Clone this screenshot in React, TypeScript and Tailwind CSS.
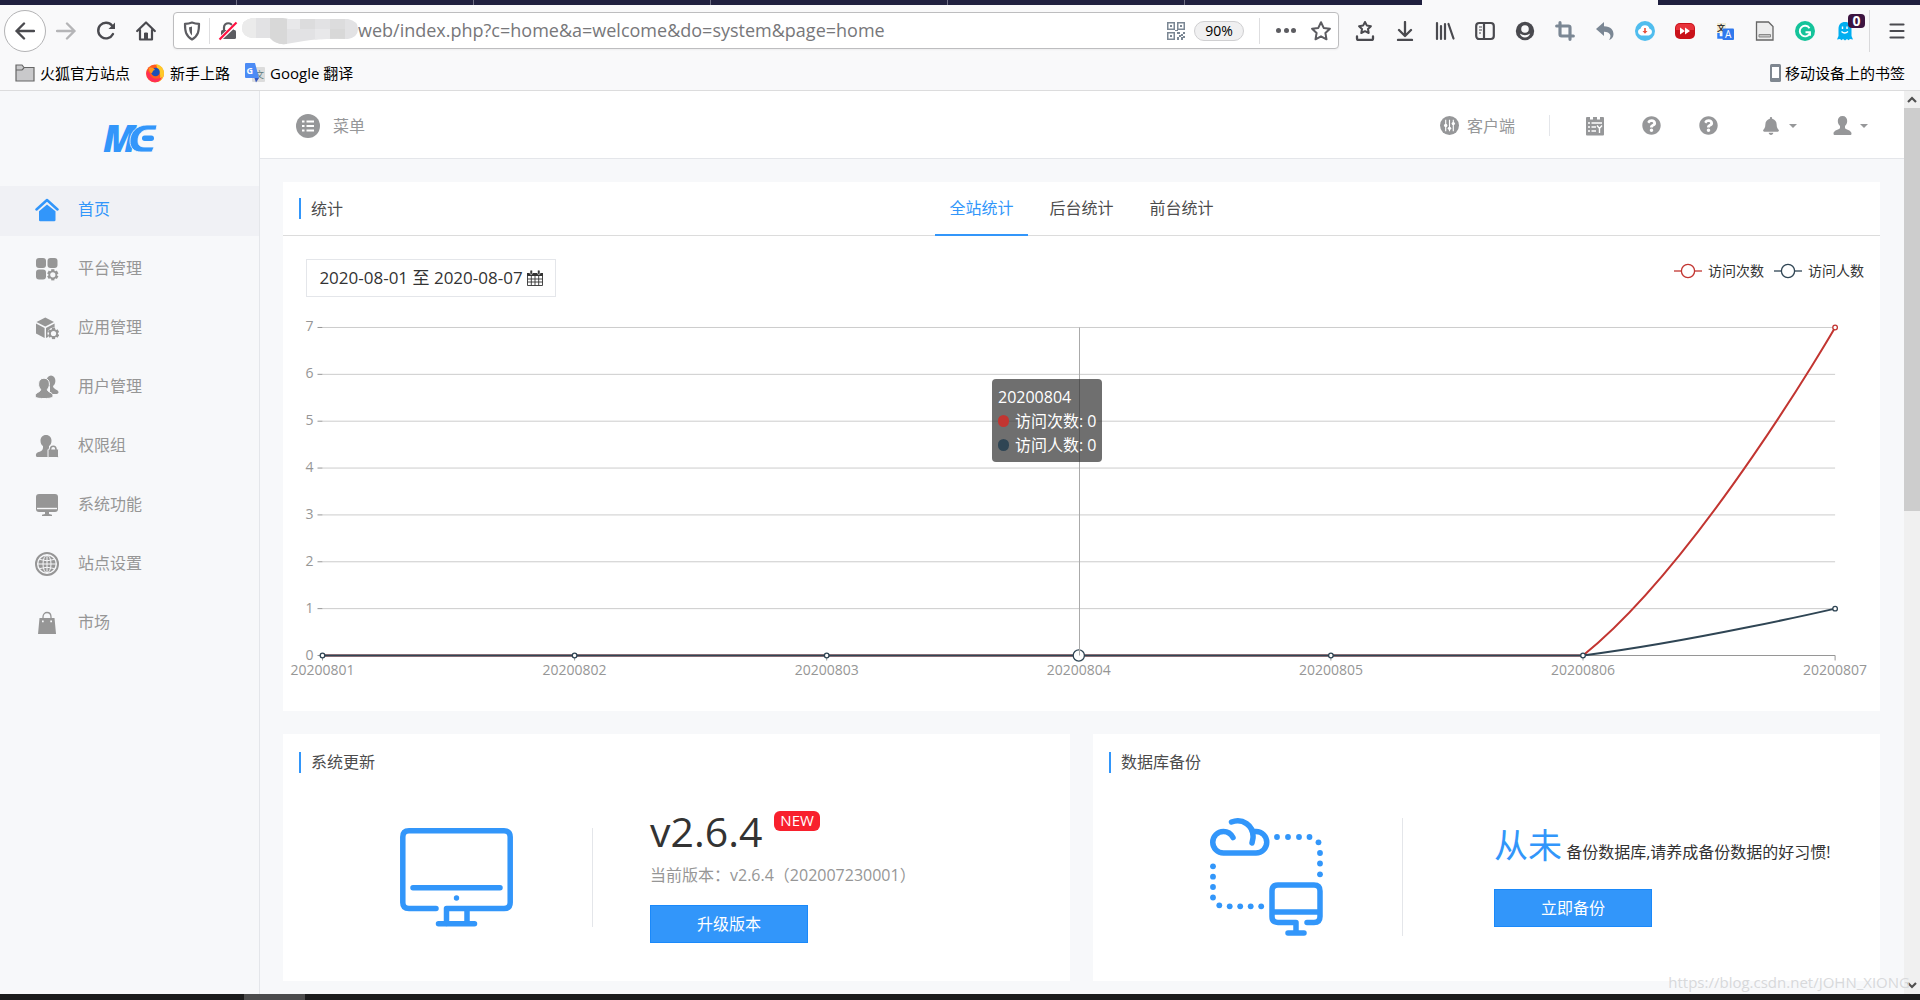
import React, { useState } from 'react';
import { FaBell, FaQuestionCircle } from 'react-icons/fa';
import { Crop } from 'lucide-react';

const GREY = '#4a4a4f';

const MENU = [
  { key: 'home', label: '首页' },
  { key: 'platform', label: '平台管理' },
  { key: 'app', label: '应用管理' },
  { key: 'user', label: '用户管理' },
  { key: 'role', label: '权限组' },
  { key: 'system', label: '系统功能' },
  { key: 'site', label: '站点设置' },
  { key: 'market', label: '市场' },
];

const TABS = ['全站统计', '后台统计', '前台统计'];
const DAYS = ['20200801', '20200802', '20200803', '20200804', '20200805', '20200806', '20200807'];

const Gear = ({ x, y }: { x: number; y: number }) => (
  <g transform={`translate(${x} ${y})`}>
    {[0, 60, 120].map(a => (
      <rect key={a} x="-1.6" y="-5.6" width="3.2" height="11.2" transform={`rotate(${a})`} />
    ))}
    <circle r="4.4" />
    <circle r="2.6" fill="#f7f8fa" />
  </g>
);

const MenuIcon = ({ name }: { name: string }) => (
  <svg viewBox="0 0 24 24" className="w-6 h-6 shrink-0" fill="currentColor">
    {name === 'home' && (
      <>
        <path d="M1.500 11.500 12 2l10.500 9.500" fill="none" stroke="currentColor" strokeWidth="2.500" strokeLinecap="round" strokeLinejoin="round" />
        <path d="M4 13.200 12 6.500l8.500 6.700V22a1.300 1.300 0 0 1-1.300 1.300H5.200A1.300 1.300 0 0 1 4 22Z" />
      </>
    )}
    {name === 'platform' && (
      <>
        <rect x="1" y="1" width="10" height="10" rx="3" />
        <rect x="12.500" y="1" width="10" height="10" rx="3" />
        <rect x="1" y="12.500" width="10" height="10" rx="3" />
        <Gear x={17.8} y={17.8} />
      </>
    )}
    {name === 'app' && (
      <>
        <path d="M10.300 1.500 19 5.900 10.300 10.500 1.500 6.100Z" />
        <path d="M1 7.500l8.600 4.500V22L1 17.500Z" />
        <path d="M19.600 7.500 11 12v10l3-1.500.3-6 5.300-2.500Z" />
        <circle cx="18.500" cy="17.500" r="6" fill="#f7f8fa" />
        <Gear x={18.5} y={17.5} />
      </>
    )}
    {name === 'user' && (
      <>
        <ellipse cx="16" cy="6" rx="4.400" ry="5.500" />
        <path d="M15 11h3c.2 3.500 5.500 3.500 5.500 6 0 1.500-1 2-2.500 2h-6Z" />
        <path d="M9 3.200c3.500 0 5.400 2.600 5.400 5.800 0 2.600-.8 4-2 5.200-.5 3.200 5.600 2.800 5.600 6.600 0 2-2 2.700-9 2.700S.3 22.800.3 20.800C.3 17 6 17.400 5.600 14.200 4.400 13 3.600 11.600 3.600 9 3.600 5.800 5.500 3.200 9 3.200Z" stroke="#f7f8fa" />
      </>
    )}
    {name === 'role' && (
      <>
        <path d="M11 1c3.500 0 5.500 2.500 5.500 5.700 0 2.500-1 4.300-2.500 5.300v4l-1 7H2c-1.500-.5-1.500-3.500.5-4.500 3-1.300 6-1.500 5.500-6.500C6.500 11 5.500 9.200 5.500 6.700 5.500 3.500 7.500 1 11 1Z" />
        <rect x="13" y="15" width="10.500" height="8.500" rx="1" stroke="#f7f8fa" />
        <path d="M15.500 16.500v-1.300c0-4 5.500-4 5.500 0v1.300" fill="none" stroke="currentColor" strokeWidth="1.600" />
      </>
    )}
    {name === 'system' && (
      <>
        <rect x="1" y="1" width="22" height="18" rx="3" />
        <path d="M2 15.500h20" stroke="#f7f8fa" strokeWidth="1.400" />
        <path d="M10 19h4v2l3 .8V23H7v-1.200l3-.8Z" />
      </>
    )}
    {name === 'site' && (
      <>
        <circle cx="12" cy="12" r="11" fill="none" stroke="currentColor" strokeWidth="2" />
        <circle cx="12" cy="12" r="8.600" />
        <g fill="none" stroke="#f7f8fa" strokeWidth="1">
          <ellipse cx="12" cy="12" rx="4" ry="8.800" />
          <path d="M3 12h18M12 3v18M5 7.500q7 2.500 14 0M5 16.500q7-2.500 14 0" />
        </g>
      </>
    )}
    {name === 'market' && (
      <>
        <path d="M4.500 7h15l1.500 16H3Z" />
        <path d="M8 9.500V6c0-6 8-6 8 0v3.500" fill="none" stroke="currentColor" strokeWidth="1.300" />
        <path d="M7 9.500h1.700v1.700H7zM15.300 9.500H17v1.700h-1.700z" fill="#f7f8fa" />
      </>
    )}
  </svg>
);

const ToolButton = ({ label, children }: { label: string; children: React.ReactNode }) => (
  <button aria-label={label} className="w-10 h-10 flex items-center justify-center shrink-0 relative">
    {children}
  </button>
);

const Extensions = () => (
  <div className="flex items-center ml-1.5">
    <ToolButton label="保存书签">
      <svg viewBox="0 0 20 20" className="w-5 h-5" fill="none" stroke={GREY} strokeWidth="2" strokeLinejoin="round" strokeLinecap="round">
        <path d="m10 1 1.900 3.600 4 .6-2.900 2.800.7 4-3.700-1.800L6.300 12l.7-4-2.900-2.800 4-.6Z" />
        <path d="M2 15.500v2q0 1.500 1.500 1.500h13q1.500 0 1.500-1.500v-2" strokeWidth="2.300" />
      </svg>
    </ToolButton>
    <ToolButton label="下载">
      <svg viewBox="0 0 20 20" className="w-5 h-5" fill="none" stroke={GREY} strokeWidth="2.300" strokeLinejoin="round" strokeLinecap="round">
        <path d="M10 1v13.500M4 9l6 6 6-6M3 19h14" />
      </svg>
    </ToolButton>
    <ToolButton label="书签库">
      <svg viewBox="0 0 20 20" className="w-5 h-5" fill="none" stroke={GREY} strokeWidth="2.200" strokeLinecap="round">
        <path d="M2 2v16M6 5v13M10 3v15M13.500 3l5 14.500" />
      </svg>
    </ToolButton>
    <ToolButton label="侧栏">
      <svg viewBox="0 0 20 20" className="w-5 h-5" fill="none" stroke={GREY} strokeWidth="2.200">
        <rect x="1.200" y="2" width="17.600" height="16" rx="3" />
        <path d="M9 2v16" />
        <path d="M4 6h3M4 9h3M4 12h2" strokeWidth="1.200" />
      </svg>
    </ToolButton>
    <ToolButton label="账户">
      <svg viewBox="0 0 20 20" className="w-5 h-5">
        <circle cx="10" cy="10" r="9.200" fill={GREY} />
        <circle cx="10" cy="8" r="3.800" fill="#f9f9fa" />
        <path d="M4.800 12.500q5.200 3.500 10.400 0-1.500 4-5.200 4t-5.200-4Z" fill="#f9f9fa" />
      </svg>
    </ToolButton>
    <ToolButton label="截图"><Crop className="w-5 h-5 text-[#7b8794]" strokeWidth={3.8} /></ToolButton>
    <ToolButton label="撤销">
      <svg viewBox="0 0 20 20" className="w-5 h-5" fill="#7b8794">
        <path d="M1 8 9 1v4.300c7 .2 9.500 4 9.500 8 0 3-2 5-4.500 5.700 3-4 1.500-8-5-8.200V15Z" />
      </svg>
    </ToolButton>
    <ToolButton label="云下载">
      <svg viewBox="0 0 20 20" className="w-5 h-5">
        <circle cx="10" cy="10" r="10" fill="#50bdee" />
        <path d="M6 14.500a3.500 3.500 0 0 1-.5-6.800 4.700 4.700 0 0 1 9 0 3.500 3.500 0 0 1-.5 6.800Z" fill="#fff" />
        <path d="M9.200 7h1.600v3h1.700L10 12.800 7.500 10h1.700Z" fill="#e8503a" />
      </svg>
    </ToolButton>
    <ToolButton label="视频下载">
      <svg viewBox="0 0 20 20" className="w-5 h-5">
        <rect y="2" width="20" height="16" rx="5" fill="#c9121a" />
        <path d="M1 9V7q0-4 4-4h10q4 0 4 4v2Z" fill="#e8323a" />
        <path d="m5 6.500 5 3.500-5 3.500zM10 6.500l5 3.500-5 3.500z" fill="#fff" />
      </svg>
    </ToolButton>
    <ToolButton label="翻译">
      <svg viewBox="0 0 20 20" className="w-5 h-5">
        <rect x="2" y="2" width="9" height="10" fill="#f3ecd4" />
        <text x="2" y="10" fontSize="8" fontWeight="700" fill="#333">文</text>
        <path d="M3.500 12v4.500H8" fill="none" stroke="#2f7df6" strokeWidth="2.500" />
        <rect x="7.500" y="7.500" width="11.500" height="11.500" rx="1" fill="#3079ed" />
        <text x="10" y="17" fontSize="10" fill="#fff">A</text>
      </svg>
    </ToolButton>
    <ToolButton label="阅读">
      <svg viewBox="0 0 20 20" className="w-5 h-5">
        <path d="M1.500 1h12l4.500 4.500V19h-16.500Z" fill="#ededed" stroke="#666" strokeWidth="1.300" />
        <path d="M4 13.500h11.500V16H4Z" fill="#c4c4c4" stroke="#8a8a8a" />
      </svg>
    </ToolButton>
    <ToolButton label="语法">
      <svg viewBox="0 0 20 20" className="w-5 h-5" fill="none" stroke="#fff" strokeWidth="1.900">
        <circle cx="10" cy="10" r="10" fill="#15c39a" stroke="none" />
        <path d="M14.500 7.200a5.300 5.300 0 1 0 .5 4.800M10.500 11.200h4.500v3.600" />
      </svg>
    </ToolButton>
    <ToolButton label="隐私保护">
      <svg viewBox="0 0 20 20" className="w-5 h-5" fill="#00aef0">
        <path d="M3.500 15V8C3.500 3.500 6 1 10 1s6.500 2.500 6.500 7v7l1.500 3.500-3-.5-1.500 1.200L12 18l-2 1.500L8 18l-1.500 1.200L5 18l-3 .5Z" />
        <path d="M7.500 5.500v2.500M12 5.500v2.500M6.500 10.500q3.200 3 6.500 0" fill="none" stroke="#fff" strokeWidth="1.400" />
      </svg>
      <span className="absolute top-[3px] right-0 w-[17px] h-3.5 rounded-sm bg-[#3d1440] text-white text-sm leading-3.5 font-bold text-center">0</span>
    </ToolButton>
    <div className="w-px h-[42px] bg-[#d9d9db] ml-1" />
    <button aria-label="打开菜单" className="w-[50px] h-10 pl-1 flex items-center justify-center">
      <svg viewBox="0 0 16 16" className="w-4 h-4" stroke={GREY} strokeWidth="2.200" strokeLinecap="round">
        <path d="M1.500 1.500h13M1.500 8h13M1.500 14.500h13" />
      </svg>
    </button>
  </div>
);

const QrIcon = () => (
  <svg viewBox="0 0 18 18" className="w-[18px] h-[18px] shrink-0" fill="#7b8794">
    {[[0, 0], [10, 0], [0, 10]].map(([x, y]) => (
      <g key={`${x}-${y}`}>
        <rect x={x + 0.75} y={y + 0.75} width="6.500" height="6.500" fill="none" stroke="#7b8794" strokeWidth="1.500" />
        <rect x={x + 3} y={y + 3} width="2" height="2" />
      </g>
    ))}
    <path d="M10 10h3v2h-3zM14 12h2v2h-2zM16 10h2v2h-2zM12 13h2v2h-2zM10 15h2v3h-2zM14 15h2v3h-2zM16 14h2v2h-2zM8 8h3v1H8z" />
  </svg>
);

const Browser = () => (
  <header className="bg-[#f9f9fa] shrink-0 border-b border-[#dcdcdd] text-black">
    <div className="h-[5px] flex bg-[#20203f]">
      {[1, 2, 3, 4, 5].map(n => <div key={n} className="w-[237px] border-r border-[#6d6d83]" />)}
      <div className="w-[237px]" />
      <div className="w-[236px] bg-[#f9f9fa]" />
    </div>
    <div className="h-[51px] flex items-center pl-1">
      <button aria-label="后退" className="w-[42px] h-[42px] rounded-full border border-[#b3b3b5] bg-white flex items-center justify-center shrink-0">
        <svg viewBox="0 0 20 20" className="w-5 h-5" fill="none" stroke={GREY} strokeWidth="2.400" strokeLinecap="round" strokeLinejoin="round">
          <path d="M19 10H1.500M9 2.500 1.500 10 9 17.500" />
        </svg>
      </button>
      <button aria-label="前进" className="w-10 h-10 flex items-center justify-center shrink-0">
        <svg viewBox="0 0 20 20" className="w-5 h-5" fill="none" stroke="#b5b5b7" strokeWidth="2.400" strokeLinecap="round" strokeLinejoin="round">
          <path d="M1 10h17.500M11 2.500l7.500 7.500-7.500 7.500" />
        </svg>
      </button>
      <button aria-label="刷新" className="w-10 h-10 flex items-center justify-center shrink-0">
        <svg viewBox="0 0 20 20" className="w-5 h-5" fill="none" stroke={GREY} strokeWidth="2.400" strokeLinecap="round">
          <path d="M16 4.500a7.800 7.800 0 1 0 1 8.500" />
          <path d="M19 1.500V8h-6.500Z" fill={GREY} stroke="none" />
        </svg>
      </button>
      <button aria-label="主页" className="w-10 h-10 flex items-center justify-center shrink-0">
        <svg viewBox="0 0 20 20" className="w-5 h-5" fill="none" stroke={GREY} strokeWidth="2.200" strokeLinecap="round" strokeLinejoin="round">
          <path d="M1.200 10 10 1.500l8.800 8.500M4 9v9.500h12V9" />
          <path d="M8.500 18v-6h3v6Z" fill={GREY} strokeWidth="1" />
        </svg>
      </button>
      <div className="ml-[7px] flex-1 h-[37px] bg-white border border-[#bdbdbf] rounded-sm shadow-xs flex items-center pl-[9px] pr-[7px]">
        <svg viewBox="0 0 18 20" className="w-[18px] h-5 shrink-0" fill="none" stroke="#5c5c61" strokeWidth="2.200" strokeLinejoin="round">
          <path d="M9 1.500c2.500 1 4.500 1.300 7 1.300 0 7-.5 12-7 15.700C2.500 14.800 2 9.800 2 2.800c2.500 0 4.500-.3 7-1.300Z" />
          <path d="M9 5.500c-1.200.6-2 .7-3 .8.200 4 1 6.500 3 8.200Z" fill="#5c5c61" stroke="none" />
        </svg>
        <div className="w-px h-[26px] bg-[#dedee0] ml-2" />
        <svg viewBox="0 0 20 20" className="w-5 h-5 ml-2 shrink-0">
          <rect x="3" y="9" width="15" height="9" rx="1.500" fill="#5c5c61" />
          <path d="M6 9V6.500C6 .8 14.500.8 14.500 6.500V9" fill="none" stroke="#5c5c61" strokeWidth="2.200" />
          <path d="M2 18 18.500 2.500" stroke="#fff" strokeWidth="4" />
          <path d="M1.500 18.500 18.500 1.500" stroke="#ff0f3f" strokeWidth="2.200" />
        </svg>
        <svg viewBox="0 0 116 28" className="w-[116px] h-7 ml-1 shrink-0">
          <clipPath id="smudge">
            <path d="M10 1H40Q50 3 60 2H106Q116 4 116 12T106 22Q80 21 62 24L44 27Q34 28 28 21H10Q0 19 0 11T10 1Z" />
          </clipPath>
          <g clipPath="url(#smudge)">
            <rect width="116" height="28" fill="#e2e2e4" />
            <path d="M0 0h14v28H0z" fill="#ebebeb" />
            <path d="M28 0h17v28H28zM88 12h15v12H88z" fill="#d8d8d8" />
            <path d="M58 0h15v12H58zM88 0h15v12H88z" fill="#dcdcdd" />
            <path d="M45 0h13v12H45zM73 12h15v12H73z" fill="#e8e8ea" />
          </g>
        </svg>
        <input
          aria-label="地址"
          className="flex-1 min-w-0 pb-0.5 text-lg text-[#77777a] outline-none"
          defaultValue="web/index.php?c=home&a=welcome&do=system&page=home"
        />
        <QrIcon />
        <button className="ml-[9px] w-[50px] h-5 rounded-full border border-[#cfcfd1] bg-[#f0f0f1] text-sm leading-4 shrink-0">90%</button>
        <div className="w-px h-[26px] bg-[#dedee0] ml-[15px]" />
        <button aria-label="页面操作" className="w-5 ml-4 flex justify-between">
          <i className="w-[5px] h-[5px] rounded-full bg-[#5c5c61]" />
          <i className="w-[5px] h-[5px] rounded-full bg-[#5c5c61]" />
          <i className="w-[5px] h-[5px] rounded-full bg-[#5c5c61]" />
        </button>
        <button aria-label="加入书签" className="ml-[15px]">
          <svg viewBox="0 0 20 20" className="w-5 h-5" fill="none" stroke="#5c5c61" strokeWidth="2" strokeLinejoin="round">
            <path d="m10 1.200 2.700 5.700 6.200.8-4.500 4.300 1.100 6.300-5.500-3-5.500 3L5.600 12 1.100 7.700l6.200-.8Z" />
          </svg>
        </button>
      </div>
      <Extensions />
    </div>
    <nav className="h-[34px] flex items-center px-[15px] pb-px text-[15px] leading-5">
      <a href="#" className="flex items-center gap-[5px]">
        <svg viewBox="0 0 20 18" className="w-5 h-[18px]" fill="#c9c9cb" stroke="#666" strokeWidth="1.200">
          <path d="M1 17V1h6l2 2.500h10V17Z" />
          <path d="M1 6h6l2-2" fill="none" />
        </svg>
        火狐官方站点
      </a>
      <a href="#" className="flex items-center gap-[5px] ml-[15px]">
        <svg viewBox="0 0 20 20" className="w-5 h-5">
          <circle cx="10" cy="10.500" r="9" fill="#ff5a1f" />
          <path d="M11 1c5 1 8.500 5 8 10-.5 4-3 7-6 8 3-4 3-8 0-11Z" fill="#ffc928" />
          <path d="M2 7c-2 6 2 12 8 12 4 0 6-2 7-5-4 3-11 2-12-3Z" fill="#ff2d55" />
          <circle cx="10.500" cy="9" r="4.300" fill="#1b4fb8" />
          <path d="M4 5c3-1 5 0 6 2-2 0-2 1-3 3-2 0-3-2-3-5Z" fill="#ff9a1c" />
        </svg>
        新手上路
      </a>
      <a href="#" className="flex items-center gap-[5px] ml-[15px]">
        <svg viewBox="0 0 20 20" className="w-5 h-5">
          <rect x="7" y="4" width="13" height="15" rx="1" fill="#dcdcdc" />
          <text x="10" y="15" fontSize="9" fill="#5f7d80">文</text>
          <path d="M1 0h9l4 15H1q-1 0-1-1V1q0-1 1-1Z" fill="#4c8bf5" />
          <path d="M9.500 15H14l-3 4.500Z" fill="#3558c0" />
          <text x="1.500" y="11" fontSize="9" fontWeight="700" fill="#fff">G</text>
        </svg>
        Google 翻译
      </a>
      <a href="#" className="flex items-center gap-1 ml-auto">
        <svg viewBox="0 0 11 18" className="w-[11px] h-[18px]">
          <rect width="11" height="18" rx="1.500" fill="#7f8790" />
          <rect x="2" y="3" width="7" height="11" fill="#fff" />
        </svg>
        移动设备上的书签
      </a>
    </nav>
  </header>
);

const Sidebar = () => {
  const [active, setActive] = useState('home');
  return (
    <aside className="w-[260px] shrink-0 border-r border-[#e4e6ea]">
      <div className="h-[95px] flex items-center justify-center">
        <svg viewBox="0 0 54 28" className="w-[54px] h-7 overflow-visible" fill="#3296fa">
          <text x="0" y="27" fontFamily="Open Sans" fontSize="37" fontWeight="800" fontStyle="italic">M</text>
          <path d="M54 0H44C33 0 27 8 27 16c0 7 4 11 11 11h11l2-5H42c-5 0-7-2-7-6 0-7 4-11 10-11h8Z" stroke="#f7f8fa" strokeWidth=".8" />
          <rect x="39" y="10.500" width="12" height="5.500" rx="2.700" />
        </svg>
      </div>
      <nav className="flex flex-col gap-[9px]">
        {MENU.map(item => (
          <a
            key={item.key}
            href="#"
            onClick={() => setActive(item.key)}
            className={
              'h-[50px] flex items-center gap-[19px] pl-[35px] pb-0.5 text-base ' +
              (active === item.key ? 'bg-[#f0f1f5] text-[#3296fa]' : 'text-[#969696]')
            }
          >
            <MenuIcon name={item.key} />
            <span className="pb-0.5">{item.label}</span>
          </a>
        ))}
      </nav>
    </aside>
  );
};

const Caret = () => (
  <svg viewBox="0 0 8 4" className="w-2 h-1" fill="currentColor"><path d="M0 0h8L4 4Z" /></svg>
);

const TopBar = () => (
  <div className="h-[68px] shrink-0 bg-white border-b border-[#e4e6ea] flex items-center pl-9 pr-9 pt-0.5 text-base text-[#969799]">
    <button className="flex items-center gap-[13px]">
      <svg viewBox="0 0 24 24" className="w-6 h-6">
        <circle cx="12" cy="12" r="12" fill="#969799" />
        <path d="M6 7.500h2.500M6 12h2.500M6 16.500h2.500M10.500 7.500H18M10.500 12H18M10.500 16.500H18" stroke="#fff" strokeWidth="1.800" />
      </svg>
      菜单
    </button>
    <button className="flex items-center gap-2 ml-auto">
      <svg viewBox="0 0 20 20" className="w-[19px] h-[19px]">
        <circle cx="10" cy="10" r="10" fill="#969799" />
        <path d="M6 4v12M10 4v12M14 4v12" stroke="#fff" strokeWidth="1.200" />
        <g fill="#fff"><circle cx="6" cy="10" r="1.800" /><circle cx="10" cy="13" r="1.800" /><circle cx="14" cy="8" r="1.800" /></g>
      </svg>
      客户端
    </button>
    <div className="w-px h-[21px] bg-[#e4e6ea] ml-[34px]" />
    <button aria-label="工单" className="ml-9">
      <svg viewBox="0 0 18 20" className="w-[18px] h-5">
        <path d="M1 1h3v2.500h3V1h4v2.500h3V1h3q1 0 1 1v16.500q0 1-1 1H1q-1 0-1-1V2q0-1 1-1Z" fill="#969799" />
        <path d="M2 7h2M5.500 7H16M2 11h2M5.500 11H10M2 15h2M5.500 15H10M11 9.500l2.500 3 2.500-3M13.500 12v5" stroke="#fff" strokeWidth="1.400" fill="none" />
      </svg>
    </button>
    <button aria-label="帮助" className="ml-[38px]"><FaQuestionCircle className="w-[19px] h-[19px]" /></button>
    <button aria-label="常见问题" className="ml-[38px]"><FaQuestionCircle className="w-[19px] h-[19px]" /></button>
    <button aria-label="消息" className="ml-[45px] flex items-center gap-2.5">
      <FaBell className="w-4 h-[18px]" />
      <Caret />
    </button>
    <button aria-label="账号" className="ml-9 flex items-center gap-2">
      <svg viewBox="0 0 18 19" className="w-[19px] h-[19px]" fill="currentColor">
        <path d="M9 0c3 0 4.700 2 4.700 5 0 2.300-1 4-2.200 5v2c0 1.500 6.500 2 6.500 5.500 0 1-.5 1.500-1.500 1.500h-15C.5 19 0 18.500 0 17.500 0 14 6.500 13.500 6.500 12v-2C5.300 9 4.300 7.300 4.300 5c0-3 1.700-5 4.700-5Z" />
      </svg>
      <Caret />
    </button>
  </div>
);

const CardTitle = ({ children }: { children: React.ReactNode }) => (
  <h2 className="flex items-center gap-2.5 text-base leading-6 text-[#4c4c4c]">
    <i className="w-0.5 h-[21px] bg-[#3296fa]" />
    {children}
  </h2>
);

const LegendItem = ({ label, color }: { label: string; color: string }) => (
  <span className="flex items-center gap-1.5">
    <svg viewBox="0 0 28 16" className="w-7 h-4" fill="#fff" stroke={color} strokeWidth="1.300">
      <path d="M0 8h28" />
      <circle cx="14" cy="8" r="6.600" />
    </svg>
    {label}
  </span>
);

const LEFT = 39.5;
const STEP = 252.1;
const BASE = 358.5;
const UNIT = 46.86;
const px = (i: number) => LEFT + i * STEP;
const py = (v: number) => BASE - v * UNIT;

const Chart = () => (
  <svg viewBox="0 0 1597 414" className="w-full h-auto block" fontSize="14" fill="none">
    {[0, 1, 2, 3, 4, 5, 6, 7].map(v => (
      <g key={v}>
        <path d={`M${LEFT} ${py(v)}H${px(6)}`} stroke="#ccc" />
        <path d={`M${LEFT - 5} ${py(v)}h5`} stroke="#969696" />
        <text x={LEFT - 9} y={py(v) + 4} fill="#969696" textAnchor="end">{v}</text>
      </g>
    ))}
    <path d={`M${LEFT} ${BASE}H${px(6)}`} stroke="#969696" />
    {DAYS.map((d, i) => (
      <g key={d}>
        <path d={`M${px(i)} ${BASE}v5`} stroke="#969696" />
        <text x={px(i)} y={BASE + 19} fill="#969696" textAnchor="middle">{d}</text>
      </g>
    ))}
    <path
      d={`M${px(0)} ${BASE}H${px(5)}C${px(5) + 116} ${BASE - 93} ${px(6)} ${py(7)} ${px(6)} ${py(7)}`}
      stroke="#c23531" strokeWidth="2"
    />
    <path
      d={`M${px(0)} ${BASE}H${px(5)}C${px(5) + 110} ${BASE - 14} ${px(6)} ${py(1)} ${px(6)} ${py(1)}`}
      stroke="#2f4554" strokeWidth="2"
    />
    <g fill="#fff" stroke="#2f4554" strokeWidth="1.300">
      {[0, 1, 2, 4, 5].map(i => <circle key={i} cx={px(i)} cy={BASE} r="2.300" />)}
      <circle cx={px(3)} cy={BASE} r="5.600" />
      <circle cx={px(6)} cy={py(1)} r="2.300" />
      <circle cx={px(6)} cy={py(7)} r="2.300" stroke="#c23531" />
    </g>
    <path d={`M${px(3) + 0.7} ${py(7)}V${BASE}`} stroke="#aaa" />
  </svg>
);

const Stats = () => {
  const [tab, setTab] = useState(TABS[0]);
  return (
    <section className="bg-white">
      <div className="h-[54px] px-4 border-b border-[#dcdcdc] grid grid-cols-[1fr_auto_1fr]">
        <div className="self-center"><CardTitle>统计</CardTitle></div>
        <div className="flex gap-[7px] -mb-px">
          {TABS.map(t => (
            <button
              key={t}
              onClick={() => setTab(t)}
              className={
                'w-[93px] text-base border-b-2 ' +
                (tab === t ? 'text-[#3296fa] border-[#3296fa]' : 'text-[#4c4c4c] border-transparent')
              }
            >
              {t}
            </button>
          ))}
        </div>
      </div>
      <div className="flex items-center justify-between pt-[23px] pl-[23px] pr-4">
        <button className="h-[38px] w-[250px] border border-[#e4e6ea] text-[#333] text-[17px] flex items-center justify-center gap-1 whitespace-nowrap">
          2020-08-01 至 2020-08-07
          <svg viewBox="0 0 16 16" className="w-4 h-4 shrink-0" fill="#333">
            <path d="M0 3h16v3H0z" />
            <path d="M.5 5v10.500h15V5M.5 9h15M.5 12h15M4.300 6v9.500M8 6v9.500M11.700 6v9.500" fill="none" stroke="#333" strokeWidth=".9" />
            <rect x="3" y="0" width="2.400" height="4.500" rx="1.200" stroke="#fff" strokeWidth=".6" />
            <rect x="10.600" y="0" width="2.400" height="4.500" rx="1.200" stroke="#fff" strokeWidth=".6" />
          </svg>
        </button>
        <div className="flex gap-2.5 pb-3.5 text-sm text-[#333]">
          <LegendItem label="访问次数" color="#c23531" />
          <LegendItem label="访问人数" color="#2f4554" />
        </div>
      </div>
      <div className="relative">
        <Chart />
        <div className="absolute left-[709px] top-[82px] w-[110px] h-[83px] rounded bg-[#323232]/70 text-white text-base leading-6 px-1.5 py-1.5 whitespace-nowrap">
          <div>20200804</div>
          <div className="flex items-center gap-1.5"><i className="w-[11px] h-3 shrink-0 rounded-full bg-[#c23531]" />访问次数: 0</div>
          <div className="flex items-center gap-1.5"><i className="w-[11px] h-3 shrink-0 rounded-full bg-[#2f4554]" />访问人数: 0</div>
        </div>
      </div>
    </section>
  );
};

const BlueButton = ({ children }: { children: React.ReactNode }) => (
  <button className="block w-[158px] h-[38px] bg-[#3296fa] border border-[#1a89fa] text-white text-base">{children}</button>
);

const UpdateCard = () => (
  <section className="bg-white h-[247px] flex flex-col pb-4">
    <div className="h-[55px] pl-4 pt-4"><CardTitle>系统更新</CardTitle></div>
    <div className="flex-1 flex items-center pl-[117px]">
      <svg viewBox="0 0 113 99" className="w-[113px] h-[99px] shrink-0" fill="none" stroke="#3296fa" strokeWidth="5.500" strokeLinecap="round" strokeLinejoin="round">
        <path d="M36 80.500H9Q2.800 80.500 2.800 74.500V9Q2.800 2.800 9 2.800H104Q110.200 2.800 110.200 9V74.500Q110.200 80.500 104 80.500H46.500V95.500" />
        <path d="M13 59.700H100M67 81V95.500M38.500 95.700H74.500" />
        <circle cx="56.500" cy="70" r="2.700" fill="#3296fa" stroke="none" />
      </svg>
      <div className="w-px h-[99px] bg-[#e4e6ea] ml-[79px] mr-[57px]" />
      <div>
        <div className="flex items-start gap-3">
          <span className="text-[41px] leading-10 text-[#333]">v2.6.4</span>
          <span className="h-5 px-1.5 rounded-md bg-[#f8202d] text-white text-[15px] leading-[18px]">NEW</span>
        </div>
        <p className="mt-3 text-base leading-6 text-[#969696]">当前版本：v2.6.4（202007230001）</p>
        <div className="mt-[18px]"><BlueButton>升级版本</BlueButton></div>
      </div>
    </div>
  </section>
);

const DOTS = [
  [67, 19], [78, 19], [89, 19], [99.5, 19], [108.5, 24.3], [110, 35], [110, 45.5], [110, 56.3],
  [3, 48.3], [3, 58.7], [3, 69], [3, 79.5], [9.3, 87.3], [19.7, 88.3], [30.2, 88.3], [40.7, 88.3], [51.2, 88.3],
];

const BackupCard = () => (
  <section className="bg-white h-[247px] flex flex-col pb-4">
    <div className="h-[55px] pl-4 pt-4"><CardTitle>数据库备份</CardTitle></div>
    <div className="flex-1 flex items-center pl-[117px]">
      <svg viewBox="0 0 113 118" className="w-[113px] h-[118px] shrink-0" fill="none" stroke="#3296fa" strokeWidth="5.500" strokeLinecap="round" strokeLinejoin="round">
        <path d="M23 19.500C20 14 16 13.500 13.500 13.500A10.700 10.700 0 0 0 13.500 35H46A10.700 10.700 0 0 0 46 13.500H42.500" />
        <path d="M21.500 4C32 0 44 7 43 20L42 25" />
        <path d="M97 104.500H104Q110 104.500 110 98.500V73Q110 67 104 67H68Q62 67 62 73V98.500Q62 104.500 68 104.500H86V114M62 94H110M78 115H94" />
        <g fill="#3296fa" stroke="none">
          {DOTS.map(([x, y]) => <circle key={`${x}-${y}`} cx={x} cy={y} r="2.900" />)}
        </g>
      </svg>
      <div className="w-px h-[118px] bg-[#e4e6ea] ml-[79px] mr-[91px]" />
      <div>
        <p className="h-9 text-base leading-9 text-[#333] whitespace-nowrap">
          <span className="text-[34px] text-[#3296fa]">从未</span> 备份数据库,请养成备份数据的好习惯!
        </p>
        <div className="mt-[26px]"><BlueButton>立即备份</BlueButton></div>
      </div>
    </div>
  </section>
);

const Scrollbar = () => (
  <div className="w-4 shrink-0 bg-[#f0f0f0] flex flex-col items-center">
    <svg viewBox="0 0 16 17" className="w-4 h-[17px]" fill="none" stroke="#505050" strokeWidth="2.200"><path d="m4 11 4-4 4 4" /></svg>
    <div className="w-full h-[403px] bg-[#cdcdcd]" />
    <svg viewBox="0 0 16 17" className="w-4 h-[17px] mt-auto" fill="none" stroke="#505050" strokeWidth="2.200"><path d="m4 6 4 4 4-4" /></svg>
  </div>
);

export default function App() {
  return (
    <div className="h-screen flex flex-col overflow-hidden bg-[#f7f8fa] font-['Open_Sans','Noto_Sans_CJK_SC',sans-serif]">
      <Browser />
      <div className="flex-1 min-h-0 flex relative">
        <Sidebar />
        <div className="flex-1 min-w-0 flex flex-col">
          <TopBar />
          <main className="flex-1 min-h-0 overflow-hidden p-[23px] pr-6 flex flex-col gap-[23px]">
            <Stats />
            <div className="grid grid-cols-2 gap-[23px]">
              <UpdateCard />
              <BackupCard />
            </div>
          </main>
        </div>
        <Scrollbar />
        <span className="absolute right-2.5 bottom-0 text-[15px] leading-6 text-[#d8d9db]">https://blog.csdn.net/JOHN_XIONG</span>
      </div>
      <footer className="h-1.5 shrink-0 bg-[#1b1b1c] flex">
        <div className="w-[61px] ml-[244px] bg-[#4b4b4c]" />
      </footer>
    </div>
  );
}
